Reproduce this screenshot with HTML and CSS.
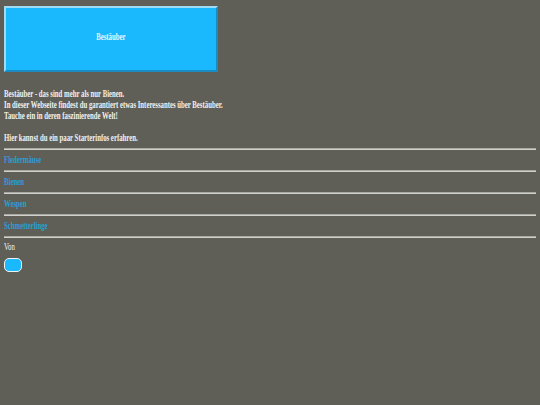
FILE: index.html
```html
<!DOCTYPE html>
<html lang="de">
<head>
<meta charset="utf-8">
<title>Bestäuber</title>
<link rel="stylesheet" href="styles.css">
</head>
<body>
<div class="page">
  <button class="hero"><span class="sq">Bestäuber</span></button>
  <div class="intro">
    <div class="line"><span class="sq">Bestäuber - das sind mehr als nur Bienen.</span></div>
    <div class="line"><span class="sq">In dieser Webseite findest du garantiert etwas Interessantes über Bestäuber.</span></div>
    <div class="line"><span class="sq">Tauche ein in deren faszinierende Welt!</span></div>
    <div class="line blank"></div>
    <div class="line"><span class="sq">Hier kannst du ein paar Starterinfos erfahren.</span></div>
  </div>
  <div class="links">
    <hr class="rule">
    <a class="link" href="#"><span class="sq">Fledermäuse</span></a>
    <hr class="rule">
    <a class="link" href="#"><span class="sq">Bienen</span></a>
    <hr class="rule">
    <a class="link" href="#"><span class="sq">Wespen</span></a>
    <hr class="rule">
    <a class="link" href="#"><span class="sq">Schmetterlinge</span></a>
    <hr class="rule">
  </div>
  <div class="von"><span class="sq">Von</span></div>
  <button class="pill" aria-label="Von"></button>
</div>
</body>
</html>
```
FILE: styles.css
```css
html, body {
  margin: 0;
  padding: 0;
  background: #5f5f57;
}
body {
  font-family: "Liberation Serif", "Times New Roman", serif;
  font-weight: bold;
  font-size: 11px;
  color: #f2f2f2;
}
.page {
  display: flex;
  flex-direction: column;
  align-items: flex-start;
  padding: 6px 4px;
}
.sq {
  display: inline-block;
  transform: scaleX(0.615);
  transform-origin: left center;
  white-space: nowrap;
}
.hero {
  width: 214px;
  height: 66px;
  margin: 0;
  padding: 0 0 6px 0;
  background: #1ab8fd;
  border: 2px solid;
  border-color: #9fdcf3 #1a8cc2 #1a8cc2 #9fdcf3;
  color: #eaf6ff;
  font-family: inherit;
  font-weight: bold;
  font-size: 11px;
  display: flex;
  align-items: center;
  justify-content: center;
}
.hero .sq {
  transform-origin: center center;
}
.intro {
  margin-top: 16px;
  line-height: 11px;
  display: flex;
  flex-direction: column;
}
.line {
  height: 11px;
}
.links {
  align-self: stretch;
  margin-top: 5px;
  display: flex;
  flex-direction: column;
}
.rule {
  margin: 0;
  height: 0;
  border: 0;
  border-top: 1px solid #a9a9a4;
  border-bottom: 1px solid #d0d0cc;
}
.link {
  color: #289fd6;
  text-decoration: none;
  line-height: 12px;
  padding: 3px 0 5px;
}
.von {
  margin-top: 3px;
  line-height: 10px;
  font-weight: normal;
  color: #f4f4f4;
}
.pill {
  margin: 7px 0 0 0;
  padding: 0;
  width: 18px;
  height: 14px;
  border: 1px solid #f2f2f2;
  border-radius: 5px;
  background: #1ab8fd;
}
```
